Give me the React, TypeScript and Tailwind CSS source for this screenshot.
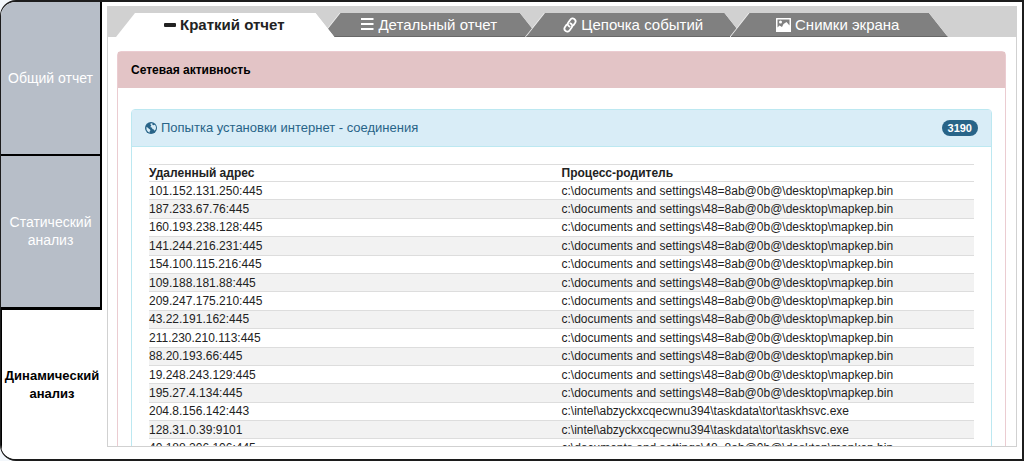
import type { ReactNode } from "react";

const mapkep = "c:\\documents and settings\\48=8ab@0b@\\desktop\\mapkep.bin";
const taskhsvc = "c:\\intel\\abzyckxcqecwnu394\\taskdata\\tor\\taskhsvc.exe";

const connections = [
  { address: "101.152.131.250:445", parent: mapkep },
  { address: "187.233.67.76:445", parent: mapkep },
  { address: "160.193.238.128:445", parent: mapkep },
  { address: "141.244.216.231:445", parent: mapkep },
  { address: "154.100.115.216:445", parent: mapkep },
  { address: "109.188.181.88:445", parent: mapkep },
  { address: "209.247.175.210:445", parent: mapkep },
  { address: "43.22.191.162:445", parent: mapkep },
  { address: "211.230.210.113:445", parent: mapkep },
  { address: "88.20.193.66:445", parent: mapkep },
  { address: "19.248.243.129:445", parent: mapkep },
  { address: "195.27.4.134:445", parent: mapkep },
  { address: "204.8.156.142:443", parent: taskhsvc },
  { address: "128.31.0.39:9101", parent: taskhsvc },
  { address: "40.188.206.106:445", parent: mapkep },
];

function MinusIcon() {
  return (
    <svg aria-hidden="true" className="h-4 w-3" viewBox="0 0 12 16" fill="currentColor">
      <rect x="0" y="6" width="12" height="4" rx="1" />
    </svg>
  );
}

function MenuIcon() {
  return (
    <svg aria-hidden="true" className="h-4 w-[14px]" viewBox="0 0 14 16" fill="currentColor">
      <path d="M1 1h12.500v2H1zM1 6h12.500v2H1zM1 11h12.500v2H1z" />
    </svg>
  );
}

function ChainIcon() {
  return (
    <svg aria-hidden="true" className="h-4 w-[14px]" viewBox="0 0 14 16" fill="none" stroke="currentColor" strokeWidth="1.800" strokeLinecap="round">
      <path d="M6.600 9.600C4.600 8.600 4.300 7 5.300 5.500L7.300 2.700C8.400 1.100 10 1 11.300 1.900C12.800 3 13 4.500 12 6L10.300 8.400" />
      <path d="M7.400 6.400C9.400 7.400 9.700 9 8.700 10.500L6.700 13.300C5.600 14.900 4 15 2.700 14.100C1.200 13 1 11.500 2 10L3.700 7.600" />
    </svg>
  );
}

function PictureIcon() {
  return (
    <svg aria-hidden="true" className="h-4 w-[15px]" viewBox="0 0 15 16" fill="currentColor">
      <path fillRule="evenodd" d="M.5 1h14a.5.5 0 0 1 .5.5v13a.5.5 0 0 1-.5.5H.5a.5.5 0 0 1-.5-.5v-13A.5.5 0 0 1 .5 1zM1.500 2.500V10.500L3.500 8.500 6 10 7.500 7 10.500 5 13.500 8.500V2.500z" />
      <circle cx="4.500" cy="5" r="1.500" />
    </svg>
  );
}

function GlobeIcon() {
  return (
    <svg aria-hidden="true" className="h-3 w-3" viewBox="0 0 12 12">
      <circle cx="6" cy="6" r="6" fill="currentColor" />
      <path fill="#d9edf7" d="M5.800 1.200 7.600 1.400 7.200 2.600 8.400 3.200 10 2.800 11 5 10.800 7.200 9.600 8.800 8.800 7.400 7.400 7 7 5.600 5.800 5.400 5.600 4.200 6.400 3.400 5.400 2.600zM1.400 5 2.600 5.400 3.600 6.600 5 7.400 5.400 8.600 4.600 9.600 4.600 10.800 3 9.800 1.600 8z" />
    </svg>
  );
}

const tabs: { label: string; icon: ReactNode; active?: boolean }[] = [
  { label: "Краткий отчет", icon: <MinusIcon />, active: true },
  { label: "Детальный отчет", icon: <MenuIcon /> },
  { label: "Цепочка событий", icon: <ChainIcon /> },
  { label: "Снимки экрана", icon: <PictureIcon /> },
];

function Tabs() {
  return (
    <div role="tablist" className="flex bg-[#d1d1d1] pt-[7px] pr-[68px] pl-2">
      {tabs.map((tab) => (
        <div
          key={tab.label}
          className={`h-6 flex-1 pl-px not-first:-ml-[14px] [clip-path:polygon(19px_0,calc(100%-19px)_0,100%_100%,0_100%)] ${
            tab.active ? "relative z-10 bg-white" : "bg-[#f0f0f0]"
          }`}
        >
          <button
            type="button"
            role="tab"
            aria-selected={!!tab.active}
            className={`flex h-full w-full items-center justify-center gap-1 pr-[3px] text-[15px] leading-6 whitespace-nowrap [clip-path:polygon(19px_0,calc(100%-19px)_0,100%_100%,0_100%)] ${
              tab.active ? "bg-white font-bold text-[#222]" : "border-b border-[#686868] bg-[#808080] text-white"
            }`}
          >
            {tab.icon}
            {tab.label}
          </button>
        </div>
      ))}
    </div>
  );
}

function Sidebar() {
  return (
    <nav className="flex w-[101px] shrink-0 flex-col text-center text-sm leading-[18px]">
      <button type="button" className="flex-51 border-r-2 border-b-2 border-black bg-[#b7bec8] text-white">
        Общий отчет
      </button>
      <button type="button" className="flex-51 border-r-2 border-b-3 border-black bg-[#b7bec8] text-white">
        Статический анализ
      </button>
      <button type="button" aria-current="page" className="flex-50 border-l border-black bg-white text-[13px] font-bold text-black">
        Динамический анализ
      </button>
    </nav>
  );
}

export default function App() {
  return (
    <div className="h-screen bg-[#f3f7fb] font-['Liberation_Sans',Arial,sans-serif] text-[#222]">
      <div className="flex h-full overflow-hidden rounded-l-2xl border-2 border-l-1 border-[#1c1c1c] bg-white">
        <Sidebar />
        <main className="flex min-w-0 flex-1 flex-col pt-1 pr-[5px] pb-3 pl-[5px]">
          <div className="min-h-0 flex-1 overflow-hidden border border-[#d1d1d1] border-t-0">
            <Tabs />
            <section className="mt-[14px] mr-[10px] ml-[9px] rounded-t border border-[#ebccd1]">
              <h2 className="bg-[#e3c4c6] px-[13px] py-2 text-xs leading-5 font-bold text-black">Сетевая активность</h2>
              <div className="px-[13px] pt-[21px]">
                <section className="rounded-t border border-[#bce8f1]">
                  <header className="flex items-center justify-between border-b border-[#bce8f1] bg-[#d9edf7] px-[13px] py-2 text-[13px] leading-5 text-[#286488]">
                    <h3 className="flex items-center gap-1">
                      <GlobeIcon />
                      Попытка установки интернет - соединения
                    </h3>
                    <span className="rounded-full bg-[#286488] px-[6px] text-[11px] leading-4 font-bold text-white">3190</span>
                  </header>
                  <div className="px-[17px] pt-[17px]">
                    <table className="h-[293px] w-full table-fixed border-collapse text-left text-xs leading-4">
                      <thead>
                        <tr className="border-t border-[#ddd]">
                          <th className="p-0 font-bold">Удаленный адрес</th>
                          <th className="p-0 font-bold">Процесс-родитель</th>
                        </tr>
                      </thead>
                      <tbody>
                        {connections.map((row) => (
                          <tr key={row.address} className="border-t border-[#ddd] even:bg-[#f2f2f2]">
                            <td className="p-0">{row.address}</td>
                            <td className="p-0">{row.parent}</td>
                          </tr>
                        ))}
                      </tbody>
                    </table>
                  </div>
                </section>
              </div>
            </section>
          </div>
        </main>
      </div>
    </div>
  );
}
